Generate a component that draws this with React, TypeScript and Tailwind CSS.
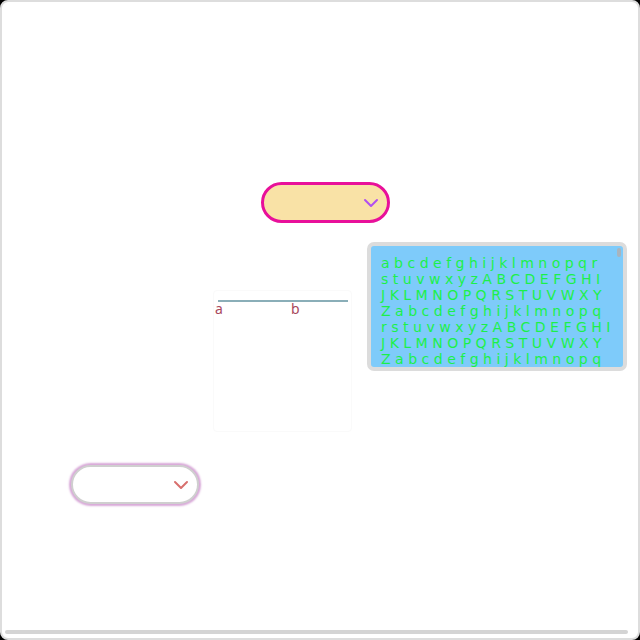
const LINES = [
  'abcdefghijklmnopqr',
  'stuvwxyzABCDEFGHI',
  'JKLMNOPQRSTUVWXY',
  'Zabcdefghijklmnopq',
  'rstuvwxyzABCDEFGHI',
  'JKLMNOPQRSTUVWXY',
  'Zabcdefghijklmnopq',
]

function Chevron({ color }: { color: string }) {
  return (
    <svg width="24" height="24" viewBox="0 0 24 24" fill="none" stroke={color} strokeWidth="2" strokeLinecap="round" strokeLinejoin="round">
      <path d="m6 9 6 6 6-6" />
    </svg>
  )
}

export default function App() {
  return (
    <div className="w-[640px] h-[640px] bg-black">
      <div className="relative w-full h-full bg-white border-2 border-[#dddddd] rounded-[8px] overflow-hidden flex flex-col">
        {/* top select */}
        <div className="mt-[180px] ml-[259px] w-[129px] h-[41px] rounded-full border-[3px] border-[#e8109a] bg-[#f9e2a6] flex items-center justify-end pr-[4px]">
          <Chevron color="#b24ff0" />
        </div>

        {/* middle row */}
        <div className="mt-[19px] flex items-start">
          <div className="ml-[211px] mt-[48px] w-[139px] h-[142px] border border-[#fafafa] rounded-[4px]">
            <div className="ml-[4px] mr-[3px] mt-[9px] h-[2px] bg-[#8aaeb8]" />
            <div className="flex text-[14px] leading-[14px] text-[#a8485c] font-['Noto_Sans',sans-serif] ml-[1px]">
              <span className="w-[76px]">a</span>
              <span>b</span>
            </div>
          </div>

          <div className="ml-[15px] w-[260px] h-[129px] border-4 border-[#dcdcdc] rounded-[7px] bg-[#7ecbfa] overflow-hidden relative">
            <div className="pl-[10px] pt-[9px] text-[14px] leading-[16px] tracking-[4.5px] text-[#1cf04a] font-['DejaVu_Sans',sans-serif]">
              {LINES.map((l, i) => (
                <div key={i} className="whitespace-nowrap">{l}</div>
              ))}
            </div>
            <div className="absolute top-[2px] right-[2px] w-[4px] h-[9px] rounded-full bg-[#a9b4bd]" />
          </div>
        </div>

        {/* lower select */}
        <div className="mt-[33px] ml-[69px] w-[128px] h-[39px] rounded-full border-2 border-[#cfcfcf] bg-white shadow-[0_0_2px_2px_#d8a8d8] flex items-center justify-end pr-[4px]">
          <Chevron color="#d8706e" />
        </div>

        {/* horizontal scrollbar */}
        <div className="mt-auto mb-[4px] ml-[3px] mr-[10px] h-[4px] rounded-full bg-[#d4d4d4]" />
      </div>
    </div>
  )
}
